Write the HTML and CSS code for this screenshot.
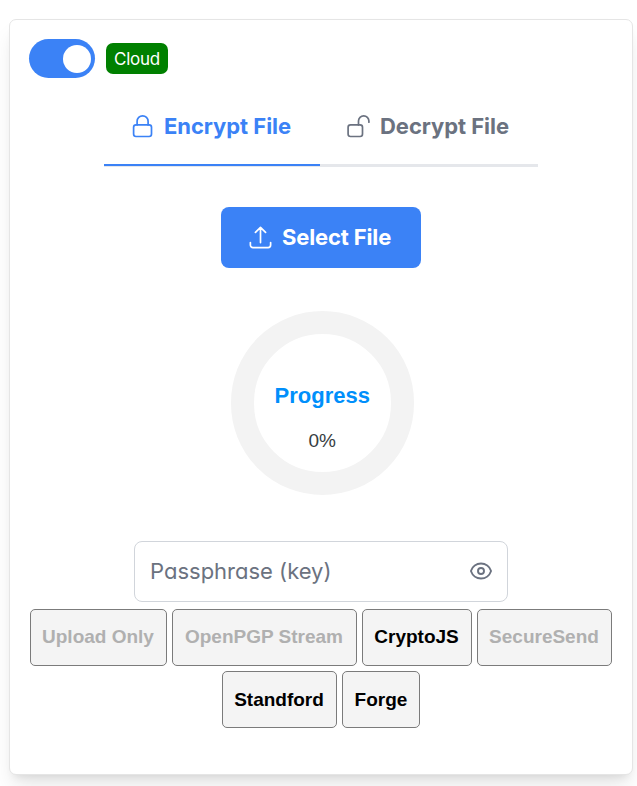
FILE: index.html
```html
<!DOCTYPE html>
<html lang="en">
<head>
<meta charset="utf-8">
<title>Encrypt File</title>
<link rel="stylesheet" href="styles.css">
</head>
<body>
<main class="card">
  <div class="mode">
    <button class="toggle" aria-label="Cloud mode"><span class="knob"></span></button>
    <span class="badge">Cloud</span>
  </div>
  <nav class="tabs">
    <a class="tab active">
      <svg class="icon lock" viewBox="0 0 27 27"><rect x="4.6" y="12.9" width="17.9" height="11.6" rx="2.4"/><path d="M8.1 12.9V9.3a5.5 5.5 0 0 1 11 0v3.6"/></svg>
      <span class="label">Encrypt File</span>
    </a>
    <a class="tab">
      <svg class="icon lock" viewBox="0 0 27 27"><rect x="3.1" y="12.9" width="14.4" height="11.6" rx="2.4"/><path d="M13.5 12.9V9a5.2 5.2 0 0 1 10.4 0v1.2"/></svg>
      <span class="label">Decrypt File</span>
    </a>
  </nav>
  <button class="select">
    <svg class="icon" viewBox="0 0 24 24"><path d="M3 16.5v2.25A2.25 2.25 0 0 0 5.25 21h13.5A2.25 2.25 0 0 0 21 18.75V16.5m-13.5-9L12 3m0 0 4.5 4.5M12 3v13.5"/></svg>
    <span class="label">Select File</span>
  </button>
  <div class="ring">
    <span class="ring-title">Progress</span>
    <span class="ring-value">0%</span>
  </div>
  <div class="field">
    <span class="placeholder">Passphrase (key)</span>
    <svg class="eye" viewBox="0 0 24 24"><path d="M2.036 12.322a1.012 1.012 0 0 1 0-.639C3.423 7.51 7.36 4.5 12 4.5c4.638 0 8.573 3.007 9.963 7.178.07.207.07.431 0 .639C20.577 16.49 16.64 19.5 12 19.5c-4.638 0-8.573-3.007-9.963-7.178Z"/><circle cx="12" cy="12" r="3"/></svg>
  </div>
  <div class="methods">
    <button class="method upload" disabled>Upload Only</button>
    <button class="method pgp" disabled>OpenPGP Stream</button>
    <button class="method crypto">CryptoJS</button>
    <button class="method secure" disabled>SecureSend</button>
    <button class="method standford">Standford</button>
    <button class="method forge">Forge</button>
  </div>
</main>
</body>
</html>
```
FILE: styles.css
```css
* { box-sizing: border-box; }
body {
  margin: 0;
  height: 786px;
  overflow: hidden;
  background: #fff;
  font-family: Inter, "Liberation Sans", sans-serif;
}
button { margin: 0; padding: 0; border: 0; font: inherit; }
svg { fill: none; stroke: currentColor; stroke-linecap: round; stroke-linejoin: round; }
.card {
  display: flex;
  flex-direction: column;
  align-items: center;
  width: 624px;
  height: 756px;
  margin: 19px 0 0 9px;
  padding: 19px 0 0;
  border: 1px solid #e5e5e5;
  border-radius: 7px;
  background: #fff;
  box-shadow: 0 14px 21px -4px rgba(0, 0, 0, .1), 0 6px 8px -5px rgba(0, 0, 0, .1);
}
.mode {
  display: flex;
  align-items: center;
  align-self: flex-start;
  gap: 11px;
  height: 39px;
  margin-left: 19px;
}
.toggle {
  display: flex;
  align-items: center;
  justify-content: flex-end;
  width: 66px;
  height: 39px;
  padding-right: 4px;
  border-radius: 20px;
  background: #3b82f6;
}
.knob { width: 28px; height: 28px; border-radius: 50%; background: #fff; }
.badge {
  width: 62px;
  height: 31px;
  border-radius: 7px;
  background: #008000;
  color: #fff;
  font-size: 17px;
  line-height: 32px;
  letter-spacing: -.25px;
  text-align: center;
}
.tabs { display: flex; width: 434px; height: 77px; margin-top: 12px; border-bottom: 3px solid #e5e7eb; }
.tab {
  display: flex;
  align-items: flex-start;
  width: 216px;
  height: 76px;
  padding: 22px 0 0 25px;
  color: #6b7280;
}
.tab.active { border-bottom: 2px solid #3b82f6; color: #3b82f6; }
.icon { flex: none; width: 27px; height: 27px; margin-right: 8px; stroke-width: 1.5; }
.lock { stroke-width: 1.7; }
.label { font-size: 22px; line-height: 28px; font-weight: 700; letter-spacing: -.05px; white-space: nowrap; }
.select {
  display: flex;
  align-items: center;
  width: 200px;
  height: 61px;
  margin-top: 40px;
  padding: 0 0 1px 26px;
  border-radius: 8px;
  background: #3b82f6;
  color: #fff;
}
.select .label { letter-spacing: -.15px; }
.ring {
  display: flex;
  flex-direction: column;
  align-items: center;
  width: 183.5px;
  height: 183.5px;
  margin: 43px 0 .5px 2.5px;
  padding-top: 50px;
  border: 23px solid #f3f3f3;
  border-radius: 50%;
  font-family: "Liberation Sans", sans-serif;
}
.ring-title { color: #008ffb; font-size: 22px; line-height: 24px; font-weight: 700; }
.ring-value { margin-top: 22px; color: #373d3f; font-size: 19px; line-height: 22px; }
.field {
  display: flex;
  align-items: center;
  justify-content: space-between;
  width: 374px;
  height: 61px;
  margin-top: 46px;
  padding: 0 14px 1px 15px;
  border: 1px solid #d1d5db;
  border-radius: 8px;
  color: #6b7280;
}
.placeholder { font-size: 22px; font-feature-settings: "cv11"; white-space: nowrap; }
.eye { width: 24px; height: 24px; stroke-width: 1.9; }
.methods {
  display: flex;
  flex-wrap: wrap;
  justify-content: center;
  gap: 5px;
  width: 600px;
  margin-top: 7px;
}
.method {
  height: 57px;
  padding: 0 1px 2px 0;
  border: 1px solid #7b7b7b;
  border-radius: 5px;
  background: #f4f4f4;
  color: #000;
  font: 700 19px/53px "Liberation Sans", sans-serif;
  white-space: nowrap;
}
.method:disabled { color: #b0b0b0; }
.upload { width: 137px; }
.pgp { width: 185px; }
.crypto { width: 110px; }
.secure { width: 135px; }
.standford { width: 115px; padding-bottom: 0; }
.forge { width: 78px; padding: 0; }
```
